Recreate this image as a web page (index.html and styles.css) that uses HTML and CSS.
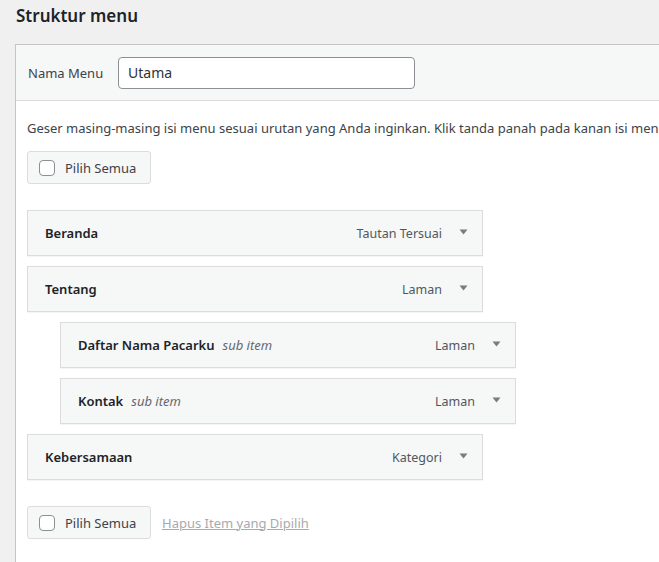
FILE: index.html
```html
<!DOCTYPE html>
<html lang="id">
<head>
<meta charset="utf-8">
<title>Struktur menu</title>
<link rel="stylesheet" href="styles.css">
</head>
<body>
<div class="page">
  <h2 class="title">Struktur menu</h2>
  <div class="panel">
    <div class="panel-head">
      <label class="name-label" for="menu-name">Nama Menu</label>
      <input id="menu-name" class="name-input" type="text" value="Utama">
    </div>
    <div class="panel-body">
      <p class="desc">Geser masing-masing isi menu sesuai urutan yang Anda inginkan. Klik tanda panah pada kanan isi menu untuk menampilkan pilihan konfigurasi tambahan.</p>
      <div class="bulk">
        <label class="select-all"><span class="check"></span>Pilih Semua</label>
      </div>
      <ul class="menu-list">
        <li class="item">
          <span class="item-title"><b>Beranda</b></span>
          <span class="item-type">Tautan Tersuai</span>
          <svg class="arrow" width="9" height="6" viewBox="0 0 9 6"><path d="M0.5 0.5h8L4.5 5.5z" fill="#787c82"/></svg>
        </li>
        <li class="item">
          <span class="item-title"><b>Tentang</b></span>
          <span class="item-type">Laman</span>
          <svg class="arrow" width="9" height="6" viewBox="0 0 9 6"><path d="M0.5 0.5h8L4.5 5.5z" fill="#787c82"/></svg>
        </li>
        <li class="item sub">
          <span class="item-title"><b>Daftar Nama Pacarku</b><i>sub item</i></span>
          <span class="item-type">Laman</span>
          <svg class="arrow" width="9" height="6" viewBox="0 0 9 6"><path d="M0.5 0.5h8L4.5 5.5z" fill="#787c82"/></svg>
        </li>
        <li class="item sub">
          <span class="item-title"><b>Kontak</b><i>sub item</i></span>
          <span class="item-type">Laman</span>
          <svg class="arrow" width="9" height="6" viewBox="0 0 9 6"><path d="M0.5 0.5h8L4.5 5.5z" fill="#787c82"/></svg>
        </li>
        <li class="item">
          <span class="item-title"><b>Kebersamaan</b></span>
          <span class="item-type">Kategori</span>
          <svg class="arrow" width="9" height="6" viewBox="0 0 9 6"><path d="M0.5 0.5h8L4.5 5.5z" fill="#787c82"/></svg>
        </li>
      </ul>
      <div class="bulk bottom">
        <label class="select-all"><span class="check"></span>Pilih Semua</label>
        <a class="remove" href="#">Hapus Item yang Dipilih</a>
      </div>
    </div>
  </div>
</div>
</body>
</html>
```
FILE: styles.css
```css
html, body {
  margin: 0;
  padding: 0;
  background: #f0f0f1;
  overflow: hidden;
}
body {
  font-family: "Noto Sans", "Open Sans", sans-serif;
  font-size: 13px;
  color: #3c434a;
}
.page {
  padding: 0 0 0 15px;
  width: 760px;
}
.title {
  margin: 0;
  padding: 4px 0 0 1px;
  height: 40px;
  font-size: 17px;
  font-weight: 600;
  color: #1d2327;
  line-height: 24px;
}
.panel {
  border: 1px solid #c3c4c7;
  background: #fff;
  height: 600px;
}
.panel-head {
  background: #f6f7f7;
  border-bottom: 1px solid #dcdcde;
  display: flex;
  align-items: center;
  height: 55px;
  padding-left: 12px;
}
.name-label {
  width: 90px;
  color: #3c434a;
}
.name-input {
  width: 297px;
  height: 32px;
  box-sizing: border-box;
  border: 1px solid #8c8f94;
  border-radius: 4px;
  padding: 0 9px;
  font-family: inherit;
  font-size: 14px;
  color: #2c3338;
  margin: 0;
}
.panel-body {
  padding: 0 11px;
}
.desc {
  margin: 0;
  padding-top: 17px;
  line-height: 20px;
  white-space: nowrap;
}
.bulk {
  display: flex;
  align-items: center;
  margin-top: 13px;
}
.select-all {
  display: flex;
  align-items: center;
  box-sizing: border-box;
  width: 124px;
  height: 33px;
  border: 1px solid #dcdcde;
  border-radius: 3px;
  background: #f6f7f7;
  padding-left: 11px;
  color: #3c434a;
}
.check {
  width: 16px;
  height: 16px;
  box-sizing: border-box;
  border: 1px solid #8c8f94;
  border-radius: 4px;
  background: #fff;
  margin-right: 10px;
}
.menu-list {
  list-style: none;
  margin: 26px 0 0;
  padding: 0;
  display: flex;
  flex-direction: column;
  gap: 10px;
}
.item {
  box-sizing: border-box;
  width: 456px;
  height: 46px;
  border: 1px solid #dcdcde;
  background: #f6f7f7;
  box-shadow: 0 1px 1px rgba(0,0,0,0.04);
  display: flex;
  align-items: center;
  padding: 0 14px 0 17px;
}
.item.sub {
  margin-left: 33px;
}
.item-title {
  flex: 1;
  color: #1d2327;
}
.item-title b {
  font-weight: 600;
}
.item-title i {
  color: #646970;
  margin-left: 8px;
}
.item-type {
  color: #50575e;
  font-size: 12.5px;
  margin-right: 17px;
}
.arrow {
  display: block;
  margin-top: -2px;
}
.bottom {
  margin-top: 26px;
}
.remove {
  margin-left: 11px;
  color: #a7aaad;
  text-decoration: underline;
}
```
